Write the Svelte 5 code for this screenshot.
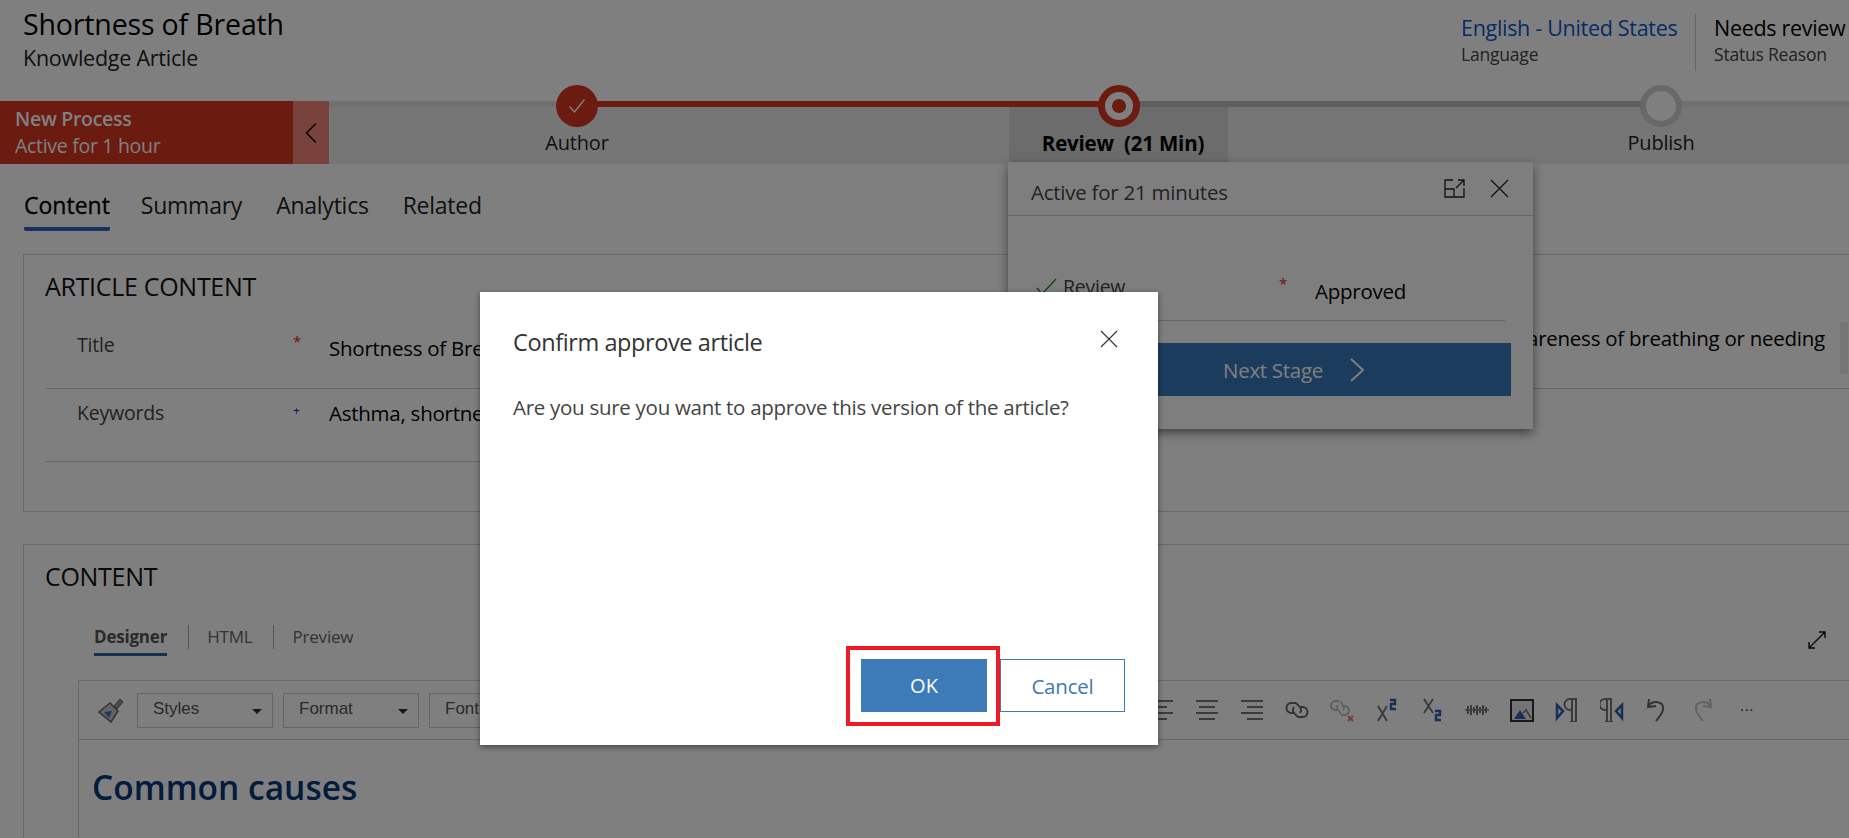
<script>
  const stages = [
    { name: 'Author', kind: 'done' },
    { name: 'Review  (21 Min)', kind: 'active' },
    { name: 'Publish', kind: 'todo' }
  ];
  const tabs = ['Content', 'Summary', 'Analytics', 'Related'];
</script>

<div class="page">
  <header class="head">
    <div class="head-title">
      <h1>Shortness of Breath</h1>
      <p>Knowledge Article</p>
    </div>
    <div class="head-fields">
      <div class="field lang">
        <a href="#lang">English - United States</a>
        <span>Language</span>
      </div>
      <div class="field status">
        <b>Needs review</b>
        <span>Status Reason</span>
      </div>
    </div>
  </header>

  <div class="process">
    <div class="flag">
      <strong>New Process</strong>
      <span>Active for 1 hour</span>
    </div>
    <div class="collapse">
      <svg width="12" height="20" viewBox="0 0 12 20"><path d="M11 0.5 1.5 10 11 19.5" fill="none" stroke="#111" stroke-width="1.6"/></svg>
    </div>
    <div class="stages">
      <i class="line red"></i>
      <i class="line dark"></i>
      {#each stages as s}
        <div class="stage {s.kind}">
          <div class="dot">
            {#if s.kind === 'done'}
              <svg width="18" height="16" viewBox="0 0 18 16"><path d="M1.5 8.5 6.5 14 16.5 1.5" fill="none" stroke="#fff" stroke-width="1.4"/></svg>
            {:else if s.kind === 'active'}
              <i></i>
            {/if}
          </div>
          <div class="stage-name">{s.name}</div>
        </div>
      {/each}
    </div>
  </div>

  <nav class="tabs">
    {#each tabs as t, i}
      <span class="tab" class:on={i === 0}>{t}</span>
    {/each}
  </nav>

  <section class="box article">
    <h2>ARTICLE CONTENT</h2>
    <div class="row first">
      <span class="lbl">Title</span>
      <span class="req">*</span>
      <span class="val">Shortness of Bre</span>
      <span class="val desc">areness of breathing or needing</span>
      <i class="thumb"></i>
    </div>
    <div class="row second">
      <span class="lbl">Keywords</span>
      <span class="rec">+</span>
      <span class="val">Asthma, shortne</span>
    </div>
  </section>

  <section class="box content">
    <h2>CONTENT</h2>
    <div class="modes">
      <span class="mode on">Designer</span>
      <span class="mode">HTML</span>
      <span class="mode">Preview</span>
      <svg class="grow" width="20" height="20" viewBox="0 0 20 20" fill="none" stroke="#111" stroke-width="1.4"><path d="M2 18 18 2M12 2h6v6M2 12v6h6"/></svg>
    </div>
    <div class="editor">
      <div class="toolbar">
        <svg class="brush" width="26" height="26" viewBox="0 0 26 26">
          <path d="M1 15 12 6l8 8-7 11z" fill="#c8c8c8" stroke="#666" stroke-width="1.5"/>
          <path d="M6 15l8-1-3 7z" fill="#3b78c4"/>
          <path d="M16 9l6-7 3 3-6 7z" fill="#999" stroke="#666"/>
        </svg>
        <span class="drop">Styles</span>
        <span class="drop">Format</span>
        <span class="drop">Font</span>
        <div class="tools">
          <svg viewBox="0 0 24 24" stroke="#777" stroke-width="2"><path d="M1 3h22M1 9h16M1 15h22M1 21h16"/></svg>
          <svg viewBox="0 0 24 24" stroke="#777" stroke-width="2"><path d="M1 3h22M4 9h16M1 15h22M4 21h16"/></svg>
          <svg viewBox="0 0 24 24" stroke="#777" stroke-width="2"><path d="M1 3h22M7 9h16M1 15h22M7 21h16"/></svg>
          <svg viewBox="0 0 24 24" fill="none" stroke="#666" stroke-width="2"><path d="M11 5H7a5 5 0 0 0-1 10h3M13 19h4a5 5 0 0 0 1-10h-3"/><path d="M9 9a5 5 0 0 0 0 6l4 4M15 15a5 5 0 0 0 0-6l-4-4" stroke-width="1.8"/></svg>
          <svg viewBox="0 0 24 24" fill="none" stroke="#c0c0c0" stroke-width="2"><path d="M9 3H6a4.500 4.500 0 0 0-1 9h3M11 17h3a4.500 4.500 0 0 0 1-9h-3"/><path d="M8 7a4 4 0 0 0 0 5l3 4M13 12a4 4 0 0 0 0-5l-3-4" stroke-width="1.6"/><path d="M18 18l5 5M23 18l-5 5" stroke="#e88070"/></svg>
          <svg viewBox="0 0 24 24" fill="none"><path d="M3 8l9 15M12 8 3 23" stroke="#777" stroke-width="2"/><path d="M15 2h5v4h-4v5h5" stroke="#2a62b0" stroke-width="2.400"/></svg>
          <svg viewBox="0 0 24 24" fill="none"><path d="M4 1l9 14M13 1 4 15" stroke="#777" stroke-width="2"/><path d="M15 13h5v4h-4v5h5" stroke="#2a62b0" stroke-width="2.400"/></svg>
          <svg viewBox="0 0 24 24" fill="none" stroke="#777"><path d="M0 12h24" stroke-width="1.500"/><path d="M3 8v8M6 7v10M9 9v6M12 7v10M15 9v6M18 7v10M21 9v6" stroke-width="2"/></svg>
          <svg viewBox="0 0 24 24" fill="none"><rect x="1" y="2" width="22" height="21" fill="#e8e8e8" stroke="#333" stroke-width="2"/><path d="M4 21l6-9 6 9z" fill="#2a62b0"/><path d="M13 15l3-3 5 8" stroke="#777" stroke-width="1.500"/></svg>
          <svg viewBox="0 0 24 24" fill="none"><path d="M2 7l6 6-6 7z" fill="#fff" stroke="#2a62b0" stroke-width="2.500"/><path d="M22 1H15a5 5 0 0 0 0 11h2M17 1v23M21 1v23M15 24h7" stroke="#777" stroke-width="2"/></svg>
          <svg viewBox="0 0 24 24" fill="none"><path d="M22 7l-6 6 6 7z" fill="#fff" stroke="#2a62b0" stroke-width="2.500"/><path d="M12 1H5a5 5 0 0 0 0 11h2M7 1v23M11 1v23M5 24h8" stroke="#777" stroke-width="2"/></svg>
          <svg viewBox="0 0 24 24" fill="none" stroke="#666" stroke-width="2"><path d="M4 1l-1 8 8-1M3 8c5-6 16-5 15 3 0 4-4 8-7 12"/></svg>
          <svg viewBox="0 0 24 24" fill="none" stroke="#c4c4c4" stroke-width="2"><path d="M20 1l1 8-8-1M21 8c-5-6-16-5-15 3 0 4 4 8 7 12"/></svg>
          <span class="more">...</span>
        </div>
      </div>
      <h3>Common causes</h3>
    </div>
  </section>

  <div class="flyout">
    <div class="fly-head">
      <span>Active for 21 minutes</span>
      <svg width="21" height="19" viewBox="0 0 21 19" fill="none" stroke="#222" stroke-width="1.3"><path d="M9 1H1v17h19V9M1 10h9v8M12 9l8-8M14 1h6v6"/></svg>
      <svg width="19" height="19" viewBox="0 0 19 19" fill="none" stroke="#222" stroke-width="1.3"><path d="M1 1l17 17M18 1 1 18"/></svg>
    </div>
    <div class="fly-row">
      <svg width="21" height="17" viewBox="0 0 21 17" fill="none" stroke="#2f8a2f" stroke-width="1.5"><path d="M1 10l5 6L20 1"/></svg>
      <span class="fly-lbl">Review</span>
      <span class="req">*</span>
      <span class="val">Approved</span>
    </div>
    <button class="next">
      <span>Next Stage</span>
      <svg width="16" height="24" viewBox="0 0 16 24" fill="none" stroke="#fff" stroke-width="2"><path d="M2 1l12 11L2 23"/></svg>
    </button>
  </div>

  <div class="scrim"></div>

  <div class="dialog">
    <div class="dlg-head">
      <h4>Confirm approve article</h4>
      <svg width="18" height="18" viewBox="0 0 18 18" fill="none" stroke="#333" stroke-width="1.1"><path d="M1 1l16 16M17 1 1 17"/></svg>
    </div>
    <p>Are you sure you want to approve this version of the article?</p>
    <div class="dlg-foot">
      <div class="ok-wrap">
        <button class="ok">OK</button>
        <i class="callout"></i>
      </div>
      <button class="cancel">Cancel</button>
    </div>
  </div>
</div>

<style>
  :global(body) { margin: 0; background: #fff; }
  .page {
    position: relative;
    width: 1849px;
    height: 838px;
    overflow: hidden;
    background: #fff;
    color: #000;
    font-family: "Open Sans", "Noto Sans", sans-serif;
  }
  h1, h2, h3, h4, p { margin: 0; font-weight: 400; }

  .head { display: flex; justify-content: space-between; height: 101px; padding-left: 23px; }
  .head-title h1 { font-size: 28.5px; line-height: 32px; padding-top: 8px; letter-spacing: -0.15px; white-space: nowrap; }
  .head-title p { font-size: 21.5px; line-height: 24px; margin-top: 6px; color: #222; letter-spacing: -0.25px; white-space: nowrap; }
  .head-fields { display: flex; padding-top: 14px; height: 57px; }
  .field { display: flex; flex-direction: column; }
  .field a, .field b { font-size: 21.5px; font-weight: 400; line-height: 28px; text-decoration: none; letter-spacing: -0.3px; white-space: nowrap; }
  .field a { color: #0a58d0; }
  .field span { font-size: 17.5px; line-height: 24px; color: #444; letter-spacing: -0.2px; white-space: nowrap; }
  .lang { width: 234px; }
  .status { width: 135px; padding-left: 18px; border-left: 1px solid #ccc; }

  .process { display: flex; height: 63px; background: #ececec; }
  .flag { flex: none; width: 278px; padding-left: 15px; background: #d63620; color: #fff; display: flex; flex-direction: column; font-size: 19.5px; line-height: 27px; padding-top: 4px; height: 59px; letter-spacing: -0.3px; }
  .flag strong { font-weight: 600; }
  .collapse { flex: none; width: 36px; background: #f28478; display: flex; align-items: center; justify-content: center; }
  .stages { position: relative; flex: 1; display: flex; margin-left: -23px; height: 63px; }
  .stages::before { content: ""; position: absolute; left: 23px; right: 0; top: 0; height: 6px; background: #e0e0e0; }
  .line { position: absolute; top: 0; height: 6px; }
  .line.red { left: 271px; width: 541px; background: #d63620; }
  .line.dark { left: 812px; width: 543px; background: #bcbcbc; }
  .stage { position: relative; flex: none; width: 542px; margin-top: -16px; display: flex; flex-direction: column; align-items: center; }
  .stage.active::before { content: ""; position: absolute; left: 161px; width: 219px; top: 22px; height: 55px; background: #d8d8d8; }
  .dot { position: relative; width: 42px; height: 42px; border-radius: 50%; box-sizing: border-box; display: flex; align-items: center; justify-content: center; }
  .done .dot { background: #d63620; }
  .active .dot { border: 7px solid #d63620; background: #fff; }
  .active .dot i { width: 14px; height: 14px; border-radius: 50%; background: #d63620; }
  .todo .dot { border: 6px solid #d0d0d0; background: #fff; }
  .stage-name { position: relative; margin-top: 2px; font-size: 20px; line-height: 28px; color: #222; white-space: pre; letter-spacing: -0.2px; }
  .active .stage-name { font-weight: 700; color: #000; font-size: 20.5px; letter-spacing: -0.2px; padding-left: 8px; }

  .tabs { display: flex; gap: 34px; padding: 27px 0 0 24px; height: 40px; }
  .tab { font-size: 23px; line-height: 28px; height: 36px; color: #222; letter-spacing: -0.25px; }
  .tab.on { color: #000; margin-right: -3px; letter-spacing: 0; border-bottom: 4px solid #2f62c0; border-radius: 0 0 2px 2px; -webkit-text-stroke: 0.3px #000; }

  .box { margin: 23px -10px 0 23px; border: 1px solid #d4d4d4; padding: 16px 0 0 21px; background: #fff; }
  .box h2 { font-size: 25px; line-height: 30px; color: #111; letter-spacing: -0.3px; }

  .article { height: 240px; }
  .row { display: grid; grid-template-columns: 32px 220px 32px 1fr auto; position: relative; border-bottom: 1px solid #d0d0d0; }
  .first { margin-top: 21px; height: 66px; padding-right: 33px; }
  .second { height: 72px; width: 1000px; }
  .lbl { grid-column: 2; font-size: 19.5px; line-height: 28px; color: #444; margin-top: 9px; letter-spacing: -0.2px; }
  .req, .rec { grid-column: 3; font-size: 15px; line-height: 18px; color: #e02020; margin: 10px 0 0 -4px; }
  .second .lbl { margin-top: 10px; }
  .rec { color: #2020d8; font-size: 12px; margin-top: 13px; }
  .val { font-size: 20.5px; line-height: 28px; color: #000; white-space: nowrap; letter-spacing: -0.25px; }
  .row .val { grid-column: 4; margin-top: 12px; }
  .second .val { margin-top: 10px; }
  .row .desc { grid-column: 5; margin-top: 2px; }
  .thumb { position: absolute; right: 10px; top: 0; width: 8px; height: 52px; background: #ededed; }

  .content { margin-top: 32px; height: 400px; padding-top: 16px; }
  .modes { position: relative; display: flex; margin: 34px 0 0 49px; height: 31px; }
  .mode { font-size: 17px; line-height: 24px; height: 24px; color: #666; position: relative; letter-spacing: -0.2px; }
  .mode.on { font-weight: 700; color: #555; margin-right: 21px; }
  .mode.on::after { content: ""; position: absolute; left: 0; right: 0; top: 28px; height: 3px; background: #2f62a8; }
  .mode:nth-child(2), .mode:nth-child(3) { border-left: 1px solid #aaa; padding-left: 18px; }
  .mode:nth-child(2) { padding-right: 21px; }
  .grow { position: absolute; left: 1713px; top: 5px; }

  .editor { margin: 24px 0 0 33px; border: 1px solid #d2d2d2; border-right: 0; height: 300px; }
  .toolbar { display: flex; align-items: center; height: 58px; padding: 0 99px 0 19px; border-bottom: 1px solid #d2d2d2; gap: 10px; }
  .brush { margin-right: 3px; flex: none; }
  .drop { position: relative; width: 119px; height: 33px; padding-left: 15px; border: 1px solid #ccc; font: 17px/30px "Liberation Sans", sans-serif; color: #555; }
  .drop::after { content: ""; position: absolute; right: 10px; top: 15px; border: 5px solid transparent; border-top-color: #333; border-bottom: 0; }
  .tools { margin-left: auto; display: flex; align-items: center; gap: 21px; }
  .tools svg { width: 24px; height: 24px; flex: none; }
  .more { width: 24px; text-align: center; font: 15px/20px "Liberation Sans", sans-serif; color: #222; letter-spacing: 0.5px; margin-bottom: 8px; }

  h3 { font-size: 33.5px; line-height: 44px; margin: 25px 0 0 13px; color: #06387c; font-weight: 600; white-space: nowrap; }

  .flyout { position: absolute; left: 1008px; top: 162px; width: 525px; height: 267px; background: #fdfdfd; box-shadow: 0 4px 10px rgba(0,0,0,.5); }
  .fly-head { display: flex; align-items: center; gap: 25px; height: 53px; padding: 0 24px 0 23px; border-bottom: 1px solid #ccc; color: #444; font-size: 20.5px; letter-spacing: -0.25px; }
  .fly-head span { margin-right: auto; margin-top: 6px; }
  .fly-row { display: flex; align-items: flex-start; height: 105px; margin: 0 28px; box-sizing: border-box; border-bottom: 1px solid #ccc; }
  .fly-row svg { margin-top: 62px; }
  .fly-lbl { margin: 57px 0 0 6px; font-size: 19.5px; line-height: 28px; color: #444; letter-spacing: -0.25px; width: 220px; }
  .fly-row .req { margin: 58px 0 0 -4px; width: 36px; }
  .fly-row .val { margin-top: 61px; }
  .next { display: flex; align-items: center; justify-content: center; gap: 26px; margin: 22px 22px 0 28px; width: 475px; height: 53px; padding: 0; background: #3878bc; border: 0; color: #fff; font: 20.5px "Open Sans", sans-serif; letter-spacing: -0.3px; }
  .next span { margin-left: 41px; }

  .scrim { position: absolute; inset: 0; background: rgba(0,0,0,.5); }

  .dialog { position: absolute; left: 480px; top: 292px; width: 678px; height: 453px; box-sizing: border-box; padding: 33px; background: #fff; box-shadow: 0 2px 6px rgba(0,0,0,.45); display: flex; flex-direction: column; }
  .dlg-head { display: flex; justify-content: space-between; align-items: flex-start; }
  .dlg-head h4 { font-size: 23.5px; line-height: 34px; color: #333; letter-spacing: -0.4px; }
  .dlg-head svg { margin: 5px 7px 0 0; }
  .dialog p { margin-top: 31px; font-size: 20.5px; line-height: 34px; color: #444; letter-spacing: -0.28px; }
  .dlg-foot { margin-top: auto; display: flex; justify-content: flex-end; gap: 13px; }
  .ok-wrap { position: relative; }
  .ok { display: block; width: 126px; height: 53px; border: 0; background: #3c7ab8; color: #fff; font: 20px "Open Sans", sans-serif; }
  .callout { position: absolute; left: -15px; right: -13px; top: -13px; bottom: -14px; border: 4px solid #ed1c24; }
  .cancel { width: 125px; height: 53px; background: #fff; border: 1px solid #3c7ab8; color: #3c7ab8; font: 20.5px "Open Sans", sans-serif; letter-spacing: -0.2px; }
</style>
